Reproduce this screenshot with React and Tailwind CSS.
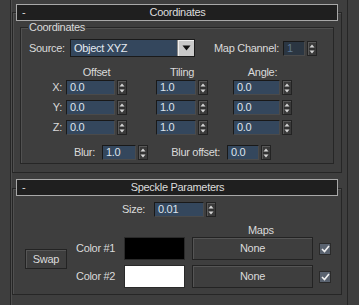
import React from 'react';

const Spin = () => (
  <div className="w-[10px] h-[15px] ml-[2px] bg-[#3a3a3a] border border-[#232323] shadow-[inset_1px_1px_0_#585858] flex items-center justify-center">
    <svg width="8" height="13" viewBox="0 0 8 13">
      <path d="M1.5 5.5 L4 2.5 L6.5 5.5Z" fill="#d4d4d4" />
      <path d="M1 7H7" stroke="#2a2a2a" strokeWidth="1" />
      <path d="M1.5 8.5 L4 11.5 L6.5 8.5Z" fill="#d4d4d4" />
    </svg>
  </div>
);

const Field = ({ w, v, dim }) => (
  <div
    className={`${w} h-[15px] border border-[#191919] border-b-[#4a4a4a] border-r-[#4a4a4a] pl-[3px] leading-[13px] ${
      dim ? 'bg-[#2b3642] text-[#5d7690]' : 'bg-[#34475d] text-[#dce4ee]'
    }`}
  >
    {v}
  </div>
);

const Spinner = ({ w, v, dim }) => (
  <div className="flex items-center">
    <Field w={w} v={v} dim={dim} />
    <Spin />
  </div>
);

const Header = ({ title }) => (
  <div className="relative z-10 mx-[4px] h-[17px] border border-[#a8a8a8] bg-[#1f1f1f] flex items-center pl-[5px] pr-[14px] text-[#dcdcdc]">
    <span className="w-[10px]">-</span>
    <span className="flex-1 text-center">{title}</span>
  </div>
);

const Btn = ({ className, children }) => (
  <div
    className={`${className} border border-[#232323] shadow-[inset_1px_1px_0_#555] bg-[#3e3e3e] flex items-center justify-center text-[#dadada]`}
  >
    {children}
  </div>
);

const Check = () => (
  <div className="w-[12px] h-[12px] bg-[#5a6370] border border-[#2a2a2a] flex items-center justify-center">
    <svg width="9" height="8" viewBox="0 0 9 8">
      <path d="M1 4 L3.5 6.5 L8 1" stroke="#f2f2f2" strokeWidth="1.6" fill="none" />
    </svg>
  </div>
);

const XYZRow = ({ axis, o, t, a }) => (
  <div className="flex items-center h-[15px]">
    <div className="w-[41px] text-right">{axis}:</div>
    <div className="ml-[4px]">
      <Spinner w="w-[49px]" v={o} />
    </div>
    <div className="ml-[29px]">
      <Spinner w="w-[40px]" v={t} />
    </div>
    <div className="ml-[25px]">
      <Spinner w="w-[47px]" v={a} />
    </div>
  </div>
);

const ColorRow = ({ label, swatch }) => (
  <div className="flex items-center h-[23px]">
    <div className="w-[48px]">{label}</div>
    <div className={`w-[61px] h-[23px] border border-[#2a2a2a] ${swatch}`} />
    <Btn className="ml-[7px] w-[121px] h-[23px]">None</Btn>
    <div className="ml-[6px]">
      <Check />
    </div>
  </div>
);

export default function App() {
  return (
    <div className="w-[359px] h-[305px] overflow-hidden bg-[#3e3e3e] flex font-['Liberation_Sans',Arial,sans-serif] text-[11px] tracking-[-0.3px] text-[#dadada] leading-none">
      <div className="ml-[10px] w-[338px] h-full border-l border-r border-[#262626] shadow-[inset_1px_0_0_#4e4e4e] pl-[1px] pt-[4px]">
        <div className="w-[330px]">
          <Header title="Coordinates" />
          <div className="-mt-[9px] h-[161px] border border-[#262626] shadow-[inset_1px_1px_0_#505050] pt-[14px] pl-[7px]">
            <div className="w-[314px] h-[137px] border border-[#262626] shadow-[inset_1px_1px_0_#515151]">
              <div className="-mt-[7px] ml-[7px] px-[1px] w-fit h-[13px] leading-[13px] bg-[#3e3e3e]">Coordinates</div>
              <div className="mt-[5px] flex items-center h-[18px] pl-[8px]">
                <div className="w-[41px]">Source:</div>
                <div className="w-[125px] h-[18px] flex border border-[#1a1a1a] bg-[#34475d]">
                  <div className="flex-1 pl-[3px] leading-[16px] text-[#e4eaf1]">Object XYZ</div>
                  <div className="w-[17px] h-full bg-[#c9c9c9] border-l border-[#8a8a8a] shadow-[inset_1px_1px_0_#efefef] flex items-center justify-center">
                    <svg width="9" height="6" viewBox="0 0 9 6">
                      <path d="M0.5 0.5 H8.5 L4.5 5.5Z" fill="#111" />
                    </svg>
                  </div>
                </div>
                <div className="ml-[19px] w-[69px]">Map Channel:</div>
                <Spinner w="w-[22px]" v="1" dim />
              </div>
              <div className="mt-[9px] h-[12px] leading-[12px] flex">
                <div className="ml-[45px] w-[61px] text-center">Offset</div>
                <div className="ml-[29px] w-[52px] text-center">Tiling</div>
                <div className="ml-[25px] w-[59px] text-center">Angle:</div>
              </div>
              <div className="mt-[2px] flex flex-col gap-[5px]">
                <XYZRow axis="X" o="0.0" t="1.0" a="0.0" />
                <XYZRow axis="Y" o="0.0" t="1.0" a="0.0" />
                <XYZRow axis="Z" o="0.0" t="1.0" a="0.0" />
              </div>
              <div className="mt-[10px] flex items-center h-[15px]">
                <div className="w-[74px] text-right">Blur:</div>
                <div className="ml-[7px]">
                  <Spinner w="w-[34px]" v="1.0" />
                </div>
                <div className="w-[72px] text-right">Blur offset:</div>
                <div className="ml-[7px]">
                  <Spinner w="w-[32px]" v="0.0" />
                </div>
              </div>
            </div>
          </div>

          <div className="mt-[6px]">
            <Header title="Speckle Parameters" />
          </div>
          <div className="-mt-[8px] h-[107px] border border-[#262626] shadow-[inset_1px_1px_0_#505050]">
            <div className="mt-[13px] flex items-center h-[15px]">
              <div className="w-[132px] text-right">Size:</div>
              <div className="ml-[9px]">
                <Spinner w="w-[50px]" v="0.01" />
              </div>
            </div>
            <div className="mt-[7px] h-[12px] leading-[12px] pl-[235px]">Maps</div>
            <div className="mt-[1px] flex">
              <Btn className="ml-[12px] mt-[12px] w-[42px] h-[20px]">Swap</Btn>
              <div className="ml-[9px] flex flex-col gap-[5px]">
                <ColorRow label="Color #1" swatch="bg-black" />
                <ColorRow label="Color #2" swatch="bg-white" />
              </div>
            </div>
          </div>
        </div>
      </div>
    </div>
  );
}
